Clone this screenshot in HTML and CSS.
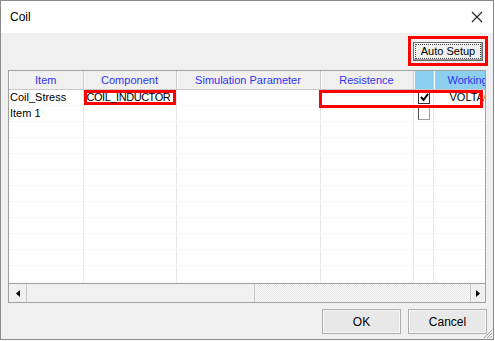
FILE: index.html
```html
<!DOCTYPE html>
<html lang="en">

<head>
    <meta charset="UTF-8">
    <title>Coil</title>
    <link rel="stylesheet" href="styles.css">
</head>

<body>
    <div class="window">
        <!-- 标题栏 -->
        <div class="titlebar">
            <span class="title">Coil</span>
            <svg class="close" width="12" height="12" viewBox="0 0 12 12">
                <path d="M1 1 L11 11 M11 1 L1 11" stroke="#222" stroke-width="1.1" fill="none" />
            </svg>
        </div>

        <div class="main">
            <div class="toolbar">
                <div class="mark">
                    <button class="btn-setup"><span>Auto Setup</span></button>
                </div>
            </div>

            <!-- 表格 -->
            <div class="grid">
                <div class="view">
                    <table>
                        <colgroup>
                            <col class="c-item">
                            <col class="c-comp">
                            <col class="c-sim">
                            <col class="c-res">
                            <col class="c-chk">
                            <col class="c-work">
                        </colgroup>
                        <tr class="head">
                            <th>Item</th>
                            <th>Component</th>
                            <th>Simulation Parameter</th>
                            <th>Resistence</th>
                            <th class="blue"></th>
                            <th class="blue">Working</th>
                        </tr>
                        <tr>
                            <td>Coil_Stress</td>
                            <td class="marked">COIL_INDUCTOR</td>
                            <td></td>
                            <td></td>
                            <td class="chk"><span class="box on">
                                <svg width="9" height="9" viewBox="0 0 9 9"><path d="M1 4 L3.5 7 L8 1" stroke="#000" stroke-width="2" fill="none" /></svg>
                            </span></td>
                            <td class="volt">VOLTAGE</td>
                        </tr>
                        <tr>
                            <td>Item 1</td>
                            <td></td>
                            <td></td>
                            <td></td>
                            <td class="chk"><span class="box off"></span></td>
                            <td></td>
                        </tr>
                        <tr><td></td><td></td><td></td><td></td><td></td><td></td></tr>
                        <tr><td></td><td></td><td></td><td></td><td></td><td></td></tr>
                        <tr><td></td><td></td><td></td><td></td><td></td><td></td></tr>
                        <tr><td></td><td></td><td></td><td></td><td></td><td></td></tr>
                        <tr><td></td><td></td><td></td><td></td><td></td><td></td></tr>
                        <tr><td></td><td></td><td></td><td></td><td></td><td></td></tr>
                        <tr><td></td><td></td><td></td><td></td><td></td><td></td></tr>
                        <tr><td></td><td></td><td></td><td></td><td></td><td></td></tr>
                        <tr><td></td><td></td><td></td><td></td><td></td><td></td></tr>
                        <tr><td></td><td></td><td></td><td></td><td></td><td></td></tr>
                        <tr><td></td><td></td><td></td><td></td><td></td><td></td></tr>
                    </table>
                    <!-- 红色标注框 -->
                    <div class="mark-res"></div>
                </div>
                <div class="hscroll">
                    <div class="arrow">
                        <svg width="4" height="7" viewBox="0 0 4 7"><path d="M4 0 L0 3.5 L4 7 Z" fill="#000" /></svg>
                    </div>
                    <div class="thumb"></div>
                    <div class="track"></div>
                    <div class="arrow">
                        <svg width="4" height="7" viewBox="0 0 4 7"><path d="M0 0 L4 3.5 L0 7 Z" fill="#000" /></svg>
                    </div>
                </div>
            </div>

            <div class="footer">
                <button class="btn">OK</button>
                <button class="btn">Cancel</button>
            </div>
            <svg class="grip" width="10" height="10" viewBox="0 0 10 10">
                <path d="M9 1 L1 9 M9 4 L4 9 M9 7 L7 9" stroke="#a0a0a0" stroke-width="1" />
            </svg>
        </div>
    </div>
</body>

</html>
```

FILE: styles.css
```css
* {
    margin: 0;
    padding: 0;
    box-sizing: border-box;
}

body {
    background: #fff;
    font-family: "Liberation Sans", Arial, sans-serif;
}

.window {
    width: 494px;
    height: 340px;
    border: 1px solid #8a8a8a;
    display: flex;
    flex-direction: column;
    background: #f0f0f0;
}

.titlebar {
    height: 32px;
    background: #fff;
    display: flex;
    align-items: center;
    justify-content: space-between;
    padding: 0 10px 0 9px;
}

.title {
    font-size: 12px;
    color: #000;
}

.main {
    flex: 1;
    display: flex;
    flex-direction: column;
    position: relative;
}

.toolbar {
    display: flex;
    justify-content: flex-end;
    padding: 3px 5px 0 0;
    height: 37px;
}

.mark {
    width: 80px;
    height: 30px;
    border: 3px solid #ff0000;
    display: flex;
    align-items: center;
    justify-content: center;
}

.btn-setup {
    width: 70px;
    height: 19px;
    font-family: "Liberation Sans", Arial, sans-serif;
    font-size: 11px;
    color: #000;
    background: #f0f0f0;
    border: 1px solid #6a6a6a;
    box-shadow: inset -1px -1px 0 #a0a0a0, inset 1px 1px 0 #fff;
    padding: 2px;
}

.btn-setup span {
    display: block;
    height: 100%;
    line-height: 13px;
    outline: 1px dotted #444;
}

.grid {
    margin: 0 7px 0 7px;
    height: 233px;
    border: 1px solid #a0a0a0;
    display: flex;
    flex-direction: column;
}

.view {
    flex: 1;
    background: #fff;
    overflow: hidden;
    position: relative;
}

table {
    border-collapse: collapse;
    table-layout: fixed;
    width: 555px;
    font-size: 11px;
}

.c-item { width: 74px; }
.c-comp { width: 93px; }
.c-sim { width: 144px; }
.c-res { width: 93px; }
.c-chk { width: 20px; }
.c-work { width: 131px; }

th {
    height: 18px;
    font-weight: normal;
    color: #3030f0;
    background: #f0f0f0;
    border-right: 1px solid #c8c8c8;
    border-bottom: 1px solid #c8c8c8;
    box-shadow: inset 1px 0 0 #fff;
    text-align: center;
    white-space: nowrap;
    overflow: hidden;
}

th.blue {
    background: #8ccfee;
    text-align: left;
    padding-left: 14px;
}

td {
    height: 16px;
    padding: 0 1px;
    border-right: 1px solid #e6e6e6;
    border-bottom: 1px solid #f6f6f6;
    white-space: nowrap;
    overflow: hidden;
    color: #000;
}

td.marked {
    box-shadow: inset 0 0 0 3px #ff0000;
    padding-left: 3px;
    letter-spacing: -0.45px;
}

td.chk {
    padding: 0 0 0 4px;
    vertical-align: top;
}

.box {
    display: block;
    width: 12px;
    height: 13px;
    margin-top: 1px;
    border: 1px solid #333;
    background: #fff;
}

.box svg {
    display: block;
    margin: 1px 0 0 1px;
}

.box.off {
    border-color: #a0a0a0;
    border-top-color: #555;
    border-left-color: #555;
}

td.volt {
    padding-left: 16px;
}

.mark-res {
    position: absolute;
    left: 310px;
    top: 19px;
    width: 164px;
    height: 18px;
    border: 3px solid #ff0000;
}

.hscroll {
    height: 19px;
    display: flex;
    border-top: 1px solid #a0a0a0;
    background: #f0f0f0;
}

.arrow {
    width: 18px;
    display: flex;
    align-items: center;
    justify-content: center;
    border-right: 1px solid #c8c8c8;
}

.arrow:last-child {
    width: 15px;
    border-right: none;
    border-left: 1px solid #c8c8c8;
}

.thumb {
    width: 228px;
    background: #f0f0f0;
    border-right: 1px solid #c8c8c8;
}

.track {
    flex: 1;
    background-color: #f4f4f4;
    background-image: repeating-conic-gradient(#e6e6e6 0 25%, #fafafa 0 50%);
    background-size: 2px 2px;
}

.footer {
    display: flex;
    justify-content: flex-end;
    gap: 7px;
    padding: 6px 6px 0 0;
}

.btn {
    width: 79px;
    height: 25px;
    font-family: "Liberation Sans", Arial, sans-serif;
    font-size: 12px;
    color: #000;
    background: #e8e8e8;
    border: 1px solid #adadad;
    box-shadow: inset 0 0 0 1px #f8f8f8;
}

.grip {
    position: absolute;
    right: 0;
    bottom: 0;
}
```
